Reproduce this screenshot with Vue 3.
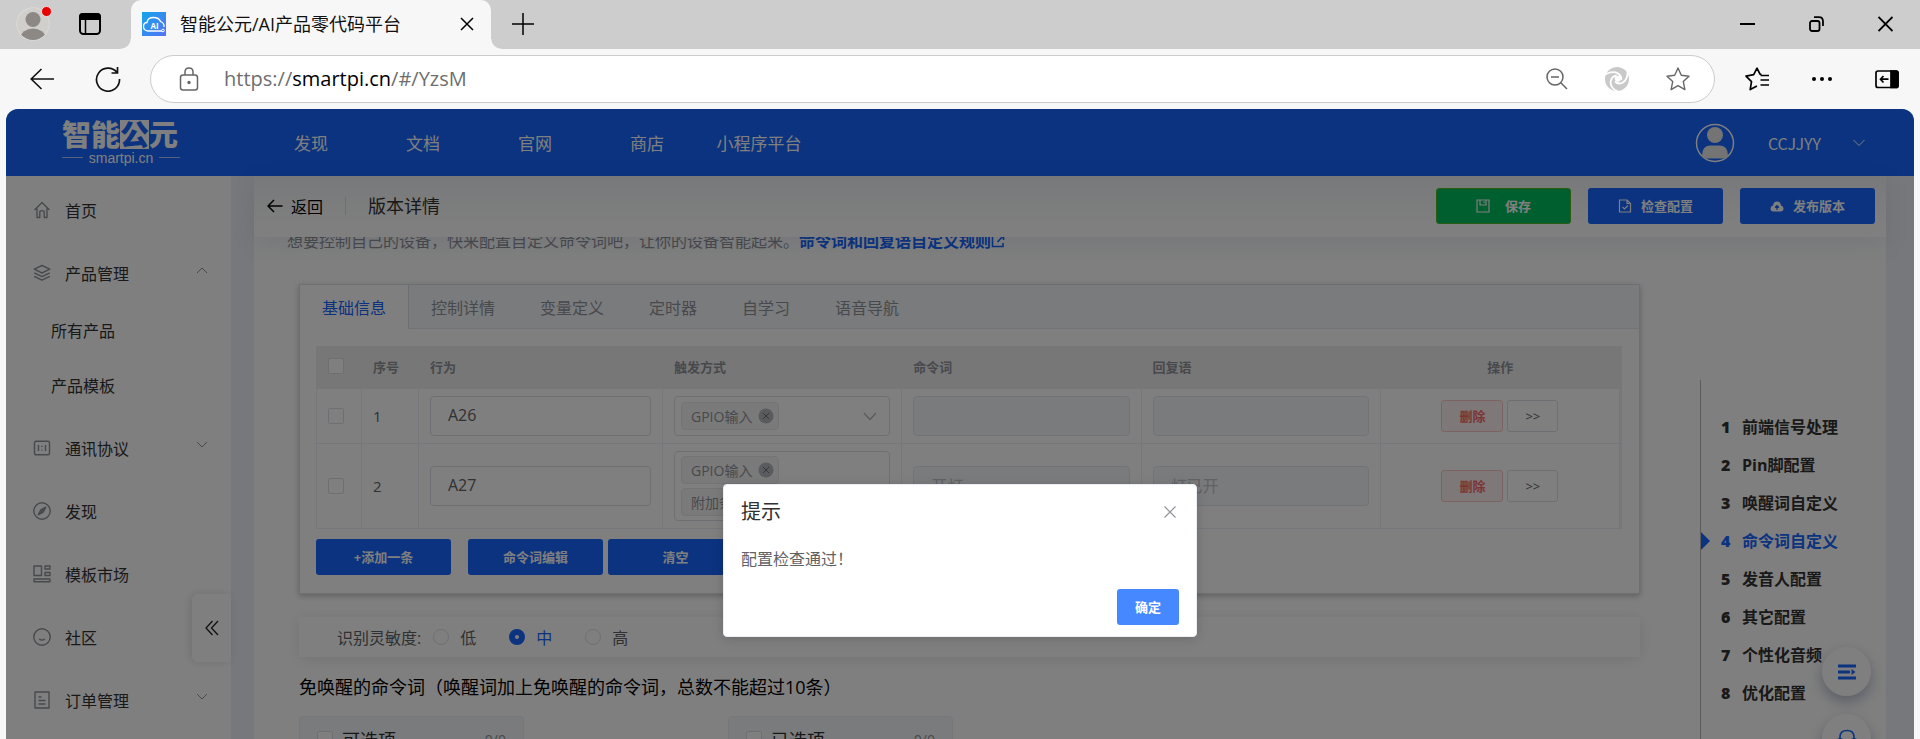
<script setup>
import { ref } from 'vue'

const navLinks = ['发现', '文档', '官网', '商店', '小程序平台']

const icons = {
  home: 'M1.5 9 9 1.5 16.5 9M4 7.5V16.5H6.8V11.2Q6.8 9.6 9 9.6T11.2 11.2V16.5H14V7.5',
  layers: 'M9 1.5 16.8 5.2 9 9 1.2 5.2ZM1.2 8.8 9 12.6 16.8 8.8M1.2 12.4 9 16.2 16.8 12.4',
  protocol: 'M3 2.2H15Q16.5 2.2 16.5 3.7V14.3Q16.5 15.8 15 15.8H3Q1.5 15.8 1.5 14.3V3.7Q1.5 2.2 3 2.2ZM5.5 6V12M12.5 6V12M9 6.8V8M9 10.4V11.6',
  compass: 'M9 .8A8.2 8.2 0 1 1 9 17.2A8.2 8.2 0 1 1 9 .8M12.8 5.2 10.2 10.2 5.2 12.8 7.8 7.8ZM11.6 6.4 6.6 11.6',
  template: 'M1 1H8.5V10.5H1ZM12 1H17V4H12ZM12 7.5H17V10.5H12ZM1 14H17V16.8H1Z',
  smile: 'M9 .8A8.2 8.2 0 1 1 9 17.2A8.2 8.2 0 1 1 9 .8M6.2 11.2Q9 13 11.8 11.2',
  order: 'M2 1H16V17H2ZM5.5 6H8.5M5.5 9.5H12.5M5.5 13H12.5',
}

const menu = [
  { label: '首页', icon: icons.home },
  { label: '产品管理', icon: icons.layers, fold: 'up', children: ['所有产品', '产品模板'] },
  { label: '通讯协议', icon: icons.protocol, fold: 'down' },
  { label: '发现', icon: icons.compass },
  { label: '模板市场', icon: icons.template },
  { label: '社区', icon: icons.smile },
  { label: '订单管理', icon: icons.order, fold: 'down' },
]

const tabs = ['基础信息', '控制详情', '变量定义', '定时器', '自学习', '语音导航']
const activeTab = ref('基础信息')

const rows = ref([
  { id: 1, action: 'A26', triggers: ['GPIO输入'], command: '', reply: '' },
  { id: 2, action: 'A27', triggers: ['GPIO输入', '附加条件'], command: '开灯', reply: '灯已开' },
])

const levels = ['低', '中', '高']
const level = ref('中')

const anchors = ['前端信号处理', 'Pin脚配置', '唤醒词自定义', '命令词自定义', '发音人配置', '其它配置', '个性化音频', '优化配置']
const currentAnchor = 3
</script>

<template>
  <div class="browser">
    <div class="tab-strip">
      <div class="profile">
        <svg viewBox="0 0 34 34" width="34" height="34">
          <defs><clipPath id="pf"><circle cx="17" cy="17" r="16" /></clipPath></defs>
          <circle cx="17" cy="17" r="16.500" fill="#e6e4e0" />
          <circle cx="17" cy="17" r="16" fill="#d1cfcb" />
          <g clip-path="url(#pf)" fill="#8b8885"><circle cx="17" cy="12.500" r="7.500" /><ellipse cx="17" cy="31" rx="12.500" ry="9.500" /></g>
        </svg>
        <span class="dot"></span>
      </div>
      <svg class="tab-actions" viewBox="0 0 22 22" width="22" height="22" fill="none" stroke="#000" stroke-width="2">
        <rect x="1" y="1" width="20" height="20" rx="3.500" /><path d="M1 3.500Q1 1 3.500 1H18.500Q21 1 21 3.500V6H1Z" fill="#000" /><path d="M6.500 6V21" stroke-width="1.500" />
      </svg>
      <div class="browser-tab">
        <svg viewBox="0 0 24 24" width="24" height="24">
          <defs><linearGradient id="fv" x1="0" y1="0" x2="1" y2="1"><stop offset="0" stop-color="#14a6ea" /><stop offset="1" stop-color="#5572f5" /></linearGradient></defs>
          <rect width="24" height="24" fill="url(#fv)" />
          <path d="M20 19H6Q1.500 18.500 1.500 14.500T5 10.500Q5.500 5.500 11.500 5.500Q17 5.500 18.500 9.500Q22.500 11 22 15" fill="none" stroke="#fff" stroke-width="1.300" />
          <circle cx="21" cy="18.500" r="1.300" fill="none" stroke="#fff" />
          <text x="12.500" y="16.500" text-anchor="middle" font-size="8" font-weight="700" font-family="Open Sans, sans-serif" fill="#fff">AI</text>
        </svg>
        <span class="tab-title">智能公元/AI产品零代码平台</span>
        <button class="plain" aria-label="关闭标签页"><svg viewBox="0 0 14 14" width="14" height="14" stroke="#000" stroke-width="1.500"><path d="M1 1 13 13M13 1 1 13" /></svg></button>
      </div>
      <button class="plain new-tab" aria-label="新建标签页"><svg viewBox="0 0 22 22" width="22" height="22" stroke="#000" stroke-width="1.500"><path d="M11 0V22M0 11H22" /></svg></button>
      <div class="window-controls">
        <button class="plain" aria-label="最小化"><svg viewBox="0 0 15 16" width="15" height="16" stroke="#000" stroke-width="2"><path d="M0 8H15" /></svg></button>
        <button class="plain" aria-label="还原"><svg viewBox="0 0 15 16" width="15" height="16" fill="none" stroke="#000" stroke-width="1.800"><rect x="1" y="5" width="9.500" height="10" rx="2" /><path d="M5 1.200H10Q14 1.200 14 5.500V10" /></svg></button>
        <button class="plain" aria-label="关闭"><svg viewBox="0 0 15 16" width="15" height="16" stroke="#000" stroke-width="1.800"><path d="M.5 1 14.500 15M14.500 1 .5 15" /></svg></button>
      </div>
    </div>

    <div class="toolbar">
      <button class="plain back-btn" aria-label="后退"><svg viewBox="0 0 24 22" width="24" height="22" fill="none" stroke="#111" stroke-width="1.600"><path d="M11.500 1 1.200 11 11.500 21M1.200 11H24" /></svg></button>
      <button class="plain reload-btn" aria-label="刷新"><svg viewBox="0 0 26 26" width="26" height="26" fill="none" stroke="#111" stroke-width="1.700"><path d="M22 6.500A11.500 11.500 0 1 0 24.500 13M22.500 1V7H16.500" /></svg></button>
      <div class="address">
        <svg viewBox="0 0 20 24" width="20" height="24" fill="none" stroke="#666" stroke-width="1.500"><rect x="1.500" y="8" width="17" height="15" rx="2.500" /><path d="M6 8V5Q6 1 10 1T14 5V8" /><circle cx="10" cy="15.500" r="1" fill="#666" /></svg>
        <span class="url">https://<b>smartpi.cn</b>/#/YzsM</span>
        <svg viewBox="0 0 22 22" width="22" height="22" fill="none" stroke="#666" stroke-width="1.500"><circle cx="9" cy="9" r="8" /><path d="M5 9H13M14.800 14.800 21 21" /></svg>
        <svg viewBox="0 0 24 24" width="24" height="24" fill="none"><circle cx="12" cy="12" r="12" fill="#c9c9c9" /><g stroke="#fff" stroke-width="1.800"><path d="M0 7.500Q8 3.500 13 6.500Q17 9 16 13" /><path d="M22.500 4.500Q23 13 17 16Q13 17.500 10 14.500" /><path d="M13 24.500Q6 22 5.500 15.500Q6 9.500 11.500 8.500" /></g><circle cx="12.800" cy="11.800" r="3" fill="#fff" /></svg>
        <svg viewBox="0 0 24 24" width="24" height="24" fill="none" stroke="#666" stroke-width="1.400" stroke-linejoin="round"><path d="M12 1 15.300 8.300 23 9.200 17.300 14.600 18.900 22.600 12 18.700 5.100 22.600 6.700 14.600 1 9.200 8.700 8.300Z" /></svg>
      </div>
      <div class="toolbar-icons">
        <svg viewBox="0 0 24 24" width="24" height="24" fill="none" stroke="#000" stroke-width="1.700" stroke-linejoin="round"><path d="M16.500 7.500 15 7.200 12 1.200 8.700 7.700 1 9.200 6.500 14.600 5.200 22.600 12 19M15.500 8.500H24M15.500 13H24M15.500 18H24" /></svg>
        <svg viewBox="0 0 24 24" width="24" height="24"><circle cx="4" cy="12" r="2" /><circle cx="12" cy="12" r="2" /><circle cx="20" cy="12" r="2" /></svg>
        <svg viewBox="0 0 24 24" width="24" height="24" fill="none" stroke="#000" stroke-width="1.700"><rect x="1" y="4" width="22" height="16.500" rx="2" /><path d="M16 4H21Q23 4 23 6V18.500Q23 20.500 21 20.500H16Z" fill="#000" /><path d="M8.500 9 5.500 12.200 8.500 15.500M5.500 12.200H13.500" /></svg>
      </div>
    </div>

    <div class="viewport">
      <header class="site-header">
        <div class="logo">
          <div class="logo-name">智能<span>公</span>元</div>
          <div class="logo-domain">smartpi.cn</div>
        </div>
        <nav class="site-nav"><a v-for="n in navLinks" :key="n" href="#">{{ n }}</a></nav>
        <div class="account">
          <svg viewBox="0 0 40 40" width="40" height="40"><circle cx="20" cy="20" r="18.500" fill="none" stroke="#fff" stroke-width="1.500" /><circle cx="20" cy="12" r="8" fill="#e8e8e8" /><path d="M7 33Q7 22.500 15 22.500H25Q33 22.500 33 33Q30 35.500 28 35.500H12Q9 35.500 7 33Z" fill="#e8e8e8" /></svg>
          <span>CCJJYY</span>
          <svg viewBox="0 0 12 8" width="12" height="8" fill="none" stroke="#fff"><path d="M.5 1 6 6.500 11.500 1" /></svg>
        </div>
      </header>

      <div class="body">
        <aside class="sidebar">
          <template v-for="m in menu" :key="m.label">
            <a class="menu-item" href="#">
              <svg viewBox="0 0 18 18" width="18" height="18" fill="none" stroke="#909399" stroke-width="1.400" stroke-linejoin="round"><path :d="m.icon" /></svg>
              <span>{{ m.label }}</span>
              <svg v-if="m.fold" class="fold" :class="m.fold" viewBox="0 0 12 8" width="12" height="8" fill="none" stroke="#909399"><path d="M1 1 6 6 11 1" /></svg>
            </a>
            <div v-if="m.children" class="submenu"><a v-for="c in m.children" :key="c" href="#">{{ c }}</a></div>
          </template>
          <button class="collapse" aria-label="收起菜单"><svg viewBox="0 0 14 16" width="14" height="16" fill="none" stroke="#222" stroke-width="1.300"><path d="M7.500 1 1 8 7.500 15M13 1 6.500 8 13 15" /></svg></button>
        </aside>

        <main class="main">
          <div class="page-bar">
            <button class="plain return"><svg viewBox="0 0 16 14" width="16" height="14" fill="none" stroke="#000" stroke-width="1.500"><path d="M7 1 1 7 7 13M1 7H15.500" /></svg>返回</button>
            <span class="bar-line"></span>
            <h1>版本详情</h1>
            <div class="bar-actions">
              <button class="btn save"><svg viewBox="0 0 14 14" width="14" height="14" fill="none" stroke="#fff" stroke-width="1.200"><path d="M1 1H13V13H1ZM4 1V6H10V1M8 2.500V4" /></svg>保存</button>
              <button class="btn"><svg viewBox="0 0 14 14" width="14" height="14" fill="none" stroke="#fff" stroke-width="1.200"><path d="M1.500 1H9L12.500 4.500V13H1.500ZM9 1V4.500H12.500M4.500 8 6.500 10 10 6.500" /></svg>检查配置</button>
              <button class="btn"><svg viewBox="0 0 14 14" width="14" height="14"><path d="M3.500 12.500Q.5 12.500 .5 9.500Q.5 7 3 6.500Q3.500 2.500 7 2.500T11 6.500Q13.500 7 13.500 9.500Q13.500 12.500 10.500 12.500Z" fill="#fff" /><path d="M7 11V7M5 8.500 7 6.500 9 8.500" fill="none" stroke="#1666fe" stroke-width="1.200" /></svg>发布版本</button>
            </div>
          </div>

          <div class="page-content">
            <div class="left">
              <p class="desc">想要控制自己的设备，快来配置自定义命令词吧，让你的设备智能起来。<a href="#">命令词和回复语自定义规则<svg viewBox="0 0 14 14" width="14" height="14" fill="none" stroke="#1666fe" stroke-width="1.600"><path d="M5 2H1.500V12.500H12V9M8 1.500H12.500V6M12.500 1.500 6.500 8" /></svg></a></p>

              <section class="card">
                <div class="tabs" role="tablist">
                  <button v-for="t in tabs" :key="t" role="tab" :aria-selected="t === activeTab" :class="{ active: t === activeTab }" @click="activeTab = t">{{ t }}</button>
                </div>
                <div class="card-body">
                  <table>
                    <colgroup><col class="c-check" /><col class="c-no" /><col class="c-action" /><col /><col /><col /><col /></colgroup>
                    <thead>
                      <tr><th><input type="checkbox" aria-label="全选" /></th><th>序号</th><th>行为</th><th>触发方式</th><th>命令词</th><th>回复语</th><th class="center">操作</th></tr>
                    </thead>
                    <tbody>
                      <tr v-for="r in rows" :key="r.id">
                        <td><input type="checkbox" :aria-label="'选择' + r.id" /></td>
                        <td>{{ r.id }}</td>
                        <td><input v-model="r.action" class="field" type="text" aria-label="行为" /></td>
                        <td>
                          <div class="multi" role="combobox" tabindex="0" aria-expanded="false" aria-label="触发方式">
                            <div class="tags">
                              <span v-for="g in r.triggers" :key="g" class="tag">{{ g }}<button class="plain" aria-label="移除"><svg viewBox="0 0 16 16" width="16" height="16"><circle cx="8" cy="8" r="7.500" fill="#b4b7bf" /><path d="M5 5 11 11M11 5 5 11" stroke="#6b6e75" /></svg></button></span>
                            </div>
                            <svg v-if="r.triggers.length === 1" viewBox="0 0 14 9" width="14" height="9" fill="none" stroke="#b4b7bf" stroke-width="1.300"><path d="M1 1 7 7.500 13 1" /></svg>
                          </div>
                        </td>
                        <td><input class="field" type="text" disabled :value="r.command" aria-label="命令词" /></td>
                        <td><input class="field" type="text" disabled :value="r.reply" aria-label="回复语" /></td>
                        <td class="center"><div class="ops"><button class="small danger">删除</button><button class="small">&gt;&gt;</button></div></td>
                      </tr>
                    </tbody>
                  </table>
                  <div class="table-actions">
                    <button class="btn add">+添加一条</button>
                    <button class="btn">命令词编辑</button>
                    <button class="btn">清空</button>
                  </div>
                </div>
              </section>

              <div class="sensitivity">
                <span>识别灵敏度:</span>
                <label v-for="l in levels" :key="l" :class="{ on: l === level }"><input v-model="level" type="radio" name="level" :value="l" />{{ l }}</label>
              </div>

              <h2>免唤醒的命令词（唤醒词加上免唤醒的命令词，总数不能超过10条）</h2>

              <div class="transfer">
                <div v-for="p in ['可选项', '已选项']" :key="p" class="panel">
                  <label><input type="checkbox" />{{ p }}</label><span>0/0</span>
                </div>
              </div>
            </div>

            <nav class="anchors">
              <a v-for="(a, i) in anchors" :key="a" href="#" :class="{ current: i === currentAnchor }"><b>{{ i + 1 }}</b>{{ a }}</a>
            </nav>
          </div>
        </main>
      </div>

      <div class="floats">
        <button aria-label="目录"><svg viewBox="0 0 18 16" width="18" height="16" fill="#1666fe"><path d="M0 .5H18V3.500H0ZM0 6.500H12V9.500H0ZM0 12.500H18V15.500H0ZM13.500 5 17.500 8 13.500 11Z" /></svg></button>
        <button aria-label="客服"><svg viewBox="0 0 20 20" width="20" height="20" fill="none" stroke="#1666fe" stroke-width="1.600"><path d="M3 10V8Q3 1.500 10 1.500T17 8V10M1.500 10H4.500V15.500H1.500ZM15.500 10H18.500V15.500H15.500ZM17 15.500Q16 18.500 11 18.500" /></svg></button>
      </div>

      <div class="overlay">
        <div class="dialog" role="dialog" aria-modal="true" aria-labelledby="dlg-title">
          <div class="dialog-head"><h3 id="dlg-title">提示</h3><button class="plain" aria-label="关闭"><svg viewBox="0 0 12 12" width="12" height="12" stroke="#909399" stroke-width="1.200"><path d="M.5 .5 11.500 11.500M11.500 .5 .5 11.500" /></svg></button></div>
          <p>配置检查通过！</p>
          <div class="dialog-foot"><button class="confirm">确定</button></div>
        </div>
      </div>
    </div>
  </div>
</template>

<style>
body { margin: 0; }
</style>

<style scoped>
.browser, .browser * { box-sizing: border-box; }
.browser {
  height: 100vh;
  display: flex;
  flex-direction: column;
  overflow: hidden;
  background: #f7f7f7;
  font-family: "Open Sans", "Noto Sans CJK SC", sans-serif;
  font-size: 16px;
  color: #333;
}
button, input { font: inherit; }
button { cursor: pointer; }
a { text-decoration: none; color: inherit; }
svg { flex: none; display: block; }
h1, h2, h3, p { margin: 0; font-weight: 400; }
.plain { border: 0; padding: 0; background: none; color: inherit; }

.tab-strip { display: flex; align-items: center; flex: none; height: 49px; padding: 0 27px 2px 16px; background: #cdcdcd; }
.profile { position: relative; }
.dot { position: absolute; top: -1px; right: -2px; width: 11px; height: 11px; border: 1px solid #f3dada; border-radius: 50%; background: #e60000; }
.tab-actions { margin: 0 30px 0 29px; }
.browser-tab { position: relative; display: flex; align-items: center; align-self: flex-start; width: 360px; height: 49px; padding: 0 17px 2px 11px; border-radius: 10px 10px 0 0; background: #f7f7f7; }
.browser-tab::before, .browser-tab::after { content: ""; position: absolute; bottom: 0; width: 10px; height: 10px; }
.browser-tab::before { left: -10px; background: radial-gradient(circle at 0 0, transparent 9px, #f7f7f7 10px); }
.browser-tab::after { right: -10px; background: radial-gradient(circle at 100% 0, transparent 9px, #f7f7f7 10px); }
.tab-title { flex: 1; margin-left: 14px; font-size: 18px; line-height: 24px; color: #111; white-space: nowrap; }
.new-tab { margin-left: 21px; }
.window-controls { display: flex; gap: 54px; margin-left: auto; }

.toolbar { display: flex; align-items: center; flex: none; height: 60px; padding: 0 21px 0 30px; }
.reload-btn { margin: 0 29px 0 41px; }
.address { display: flex; align-items: center; flex: 1; gap: 37px; height: 48px; padding: 0 24px 0 28px; border: 1px solid #ccc; border-radius: 24px; background: #fff; }
.url { flex: 1; margin-left: -12px; font-size: 20px; line-height: 28px; color: #6e6e6e; }
.url b { font-weight: 400; color: #000; }
.toolbar-icons { display: flex; gap: 41px; margin-left: 30px; }

.viewport { position: relative; flex: 1; min-height: 0; display: flex; flex-direction: column; margin: 0 6px; border-radius: 12px 12px 0 0; overflow: hidden; background: #eef0f6; }
.site-header { display: flex; align-items: center; flex: none; height: 67px; padding: 0 49px 0 56px; background: #1666fe; color: #fff; font-size: 17px; }
.logo { width: 118px; }
.logo-name { display: flex; font-size: 29px; line-height: 30px; font-weight: 900; white-space: nowrap; }
.logo-name span { height: 29px; line-height: 29px; background: #fff; color: #1666fe; }
.logo-domain { display: flex; align-items: center; gap: 6px; font: 14px/16px "Liberation Sans", sans-serif; }
.logo-domain::before, .logo-domain::after { content: ""; flex: 1; height: 1px; background: #aac4fa; }
.site-nav { display: flex; margin-left: 75px; padding-bottom: 1px; }
.site-nav a { width: 112px; text-align: center; }
.account { display: flex; align-items: center; margin-left: auto; }
.account span { margin: 0 32px 0 33px; font-family: "Noto Sans CJK SC", sans-serif; font-size: 16px; }

.body { display: flex; flex: 1; min-height: 0; }
.sidebar { position: relative; flex: none; width: 225px; padding-top: 2px; background: #fff; }
.menu-item { display: flex; align-items: center; gap: 14px; height: 63px; padding: 0 23px 0 27px; }
.fold { margin: 0 0 6px auto; }
.fold.up { transform: rotate(180deg); }
.submenu { padding-bottom: 2px; }
.submenu a { display: block; height: 55px; padding-left: 45px; line-height: 55px; }
.collapse { position: absolute; right: 0; top: 418px; display: flex; align-items: center; justify-content: center; width: 39px; height: 68px; border: 0; border-radius: 6px 0 0 6px; background: #fff; box-shadow: -2px 0 8px rgba(0, 0, 0, .12); }

.main { flex: 1; min-width: 0; display: flex; flex-direction: column; margin: 0 28px 0 23px; background: #fff; }
.page-bar { position: relative; z-index: 1; display: flex; align-items: center; flex: none; height: 61px; padding: 0 11px 1px 13px; background: linear-gradient(#f0f2f5, #fff 50px); box-shadow: 0 6px 24px rgba(50, 70, 130, .1); }
.return { display: flex; align-items: center; gap: 8px; color: #000; }
.bar-line { width: 1px; height: 18px; margin: 0 22px; background: #dcdfe6; }
.page-bar h1 { font-size: 18px; line-height: 24px; }
.bar-actions { display: flex; gap: 17px; margin-left: auto; }
.btn { display: flex; align-items: center; justify-content: center; gap: 9px; width: 135px; height: 36px; padding: 0 0 1px; border: 0; border-radius: 3px; background: #1666fe; color: #fff; font-size: 13px; font-weight: 700; }
.btn.save { gap: 15px; border: 1px solid #55b82c; background: #00be5f; }

.page-content { display: flex; flex: 1; min-height: 0; padding: 0 20px 0 45px; }
.left { flex: 1; min-width: 0; }
.desc { display: flex; margin: -8px 0 31px -12px; line-height: 24px; color: #909399; white-space: nowrap; }
.desc a { display: flex; align-items: center; color: #1666fe; font-weight: 700; }

.card { border: 1px solid #dcdfe6; background: #fff; box-shadow: 0 2px 6px rgba(0, 0, 0, .25); }
.tabs { display: flex; height: 44px; border-bottom: 1px solid #e4e7ed; background: #f5f7fa; }
.tabs button { height: 44px; padding: 0 22px; border: 0; border-right: 1px solid transparent; background: none; color: #909399; }
.tabs .active { border-right-color: #dcdfe6; background: #fff; color: #1666fe; }
.card-body { padding: 17px 17px 18px 16px; }
table { width: 100%; table-layout: fixed; border-collapse: separate; border-spacing: 0; border: 1px solid #ebeef5; border-width: 0 2px 0 1px; font-size: 15px; color: #606266; }
.c-check { width: 45px; }
.c-no { width: 57px; }
.c-action { width: 244px; }
th { height: 43px; padding: 0 11px 3px; background: #eee; text-align: left; font-size: 13px; color: #909399; }
td { padding: 7px 11px; border: solid #ebeef5; border-width: 0 1px 1px 0; }
.center { text-align: center; }
input[type="checkbox"] { appearance: none; display: block; width: 16px; height: 16px; margin: 0; border: 1px solid #dcdfe6; border-radius: 2px; background: #fff; }
.field { display: block; width: 100%; height: 40px; padding: 0 17px 2px; border: 1px solid #dcdfe6; border-radius: 4px; background: #fff; color: #606266; font-size: 16px; }
.field:disabled { border-color: #e4e7ed; background: #f5f7fa; color: #c0c4cc; }
.multi { display: flex; align-items: center; min-height: 40px; padding: 4px 12px 4px 6px; border: 1px solid #dcdfe6; border-radius: 4px; background: #fff; }
.tags { display: flex; flex-direction: column; align-items: flex-start; gap: 4px; flex: 1; }
.tag { display: flex; align-items: center; gap: 6px; height: 28px; padding: 0 4px 1px 9px; border: 1px solid #e9e9eb; border-radius: 4px; background: #f4f4f5; color: #909399; font-size: 14px; }
.ops { display: flex; justify-content: center; gap: 4px; }
.small { height: 32px; padding: 0 17px 1px; border: 1px solid #dcdfe6; border-radius: 3px; background: #fff; color: #606266; font-size: 13px; }
.danger { border-color: #fbc4c4; background: #fef0f0; color: #f56c6c; font-weight: 700; }
.table-actions { display: flex; gap: 5px; margin-top: 10px; }
.add { margin-right: 12px; }

.sensitivity { display: flex; align-items: center; height: 40px; margin-top: 23px; padding: 0 0 1px 38px; background: #fff; color: #606266; box-shadow: 0 2px 14px rgba(0, 0, 0, .1); }
.sensitivity label { display: flex; align-items: center; gap: 11px; width: 76px; }
.sensitivity span { margin-right: 12px; }
.sensitivity .on { color: #1666fe; }
input[type="radio"] { appearance: none; width: 16px; height: 16px; margin: 0; border: 1px solid #dcdfe6; border-radius: 50%; background: #fff; }
input[type="radio"]:checked { border: 6px solid #1666fe; }
h2 { margin: 18px 0 17px; font-size: 18px; line-height: 24px; color: #000; }
.transfer { display: flex; gap: 204px; }
.panel { display: flex; align-items: center; justify-content: space-between; width: 225px; height: 46px; padding: 0 17px; border: 1px solid #ebeef5; border-radius: 4px; background: #f5f7fa; color: #909399; font-size: 14px; }
.panel label { display: flex; align-items: center; gap: 9px; color: #303133; font-size: 18px; }

.anchors { width: 166px; margin: 143px 0 0 60px; padding-top: 28px; border-left: 1px solid #b8b8b8; font-weight: 700; }
.anchors a { position: relative; display: flex; height: 38px; padding-left: 20px; line-height: 38px; white-space: nowrap; }
.anchors b { width: 21px; }
.anchors .current { color: #1666fe; }
.anchors .current::before { content: ""; position: absolute; left: 0; top: 10px; border: 9px solid transparent; border-left-color: #1666fe; border-right: 0; }

.floats { position: absolute; z-index: 2; right: 43px; top: 538px; display: flex; flex-direction: column; gap: 18px; }
.floats button { display: flex; align-items: center; justify-content: center; width: 49px; height: 49px; border: 0; border-radius: 50%; background: #fff; box-shadow: 0 6px 14px rgba(50, 60, 110, .35); }

.overlay { position: absolute; z-index: 10; inset: 0; display: flex; justify-content: center; align-items: flex-start; padding-top: 375px; background: rgba(0, 0, 0, .5); }
.dialog { width: 474px; padding: 15px 17px 11px; border: 1px solid #ebeef5; border-radius: 4px; background: #fff; box-shadow: 0 2px 12px rgba(0, 0, 0, .15); color: #606266; }
.dialog-head { display: flex; align-items: center; justify-content: space-between; padding-right: 3px; }
.dialog h3 { font-size: 20px; line-height: 24px; color: #303133; }
.dialog p { margin: 23px 0 18px; line-height: 24px; }
.dialog-foot { display: flex; justify-content: flex-end; }
.confirm { width: 62px; height: 36px; padding: 0 0 1px; border: 0; border-radius: 3px; background: #4588ff; color: #fff; font-size: 13px; font-weight: 700; }
</style>
